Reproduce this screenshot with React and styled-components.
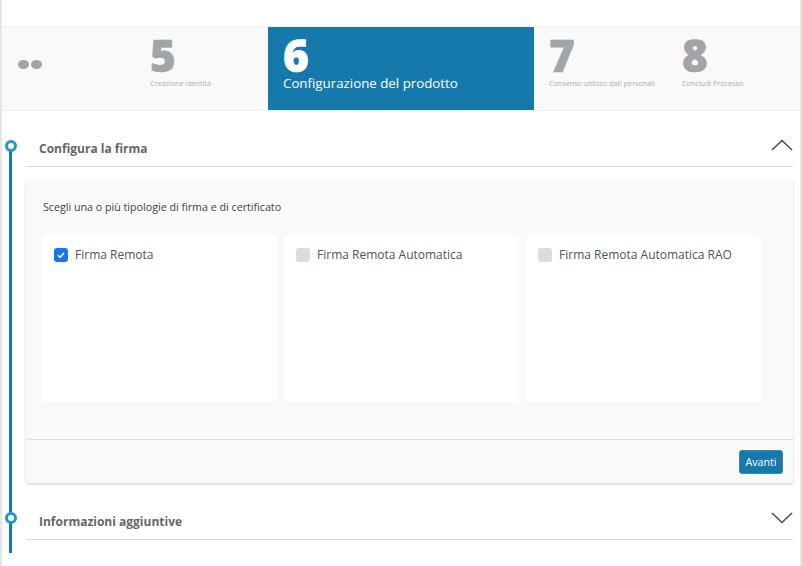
import React from "react";
import styled, { createGlobalStyle } from "styled-components";

const Global = createGlobalStyle`
  html, body { margin: 0; padding: 0; background: #fff; }
  body { font-family: "Open Sans", "Noto Sans", "Liberation Sans", sans-serif; }
`;

const Page = styled.div`
  width: 802px;
  height: 566px;
  box-sizing: border-box;
  border-left: 2px solid #e6e6e6;
  border-right: 2px solid #e6e6e6;
  padding-top: 26px;
  overflow: hidden;
`;

const Stepper = styled.div`
  display: flex;
  height: 85px;
  box-sizing: border-box;
  background: #f9f9f9;
  border-top: 1px solid #f2f2f2;
  border-bottom: 1px solid #efefef;
`;

const Dots = styled.div`
  width: 148px;
  box-sizing: border-box;
  padding: 33px 0 0 16px;
  display: flex;
  gap: 2px;
`;

const Dot = styled.span`
  width: 11px;
  height: 9px;
  border-radius: 50%;
  background: #a2a5a8;
`;

const Step = styled.div`
  width: ${(p) => p.$width}px;
  box-sizing: border-box;
  padding-left: ${(p) => p.$pad}px;
`;

const ActiveStep = styled.div`
  width: 266px;
  box-sizing: border-box;
  padding-left: 15px;
  background: #1579ab;
  color: #fff;
`;

const Number = styled.div`
  font: 800 44px/38px "Open Sans", sans-serif;
  color: ${(p) => (p.$active ? "#fff" : "#a2a5a8")};
  margin-top: 9px;
  height: 38px;
  -webkit-text-stroke: 0.6px currentColor;
`;

const StepLabel = styled.div`
  font-size: 7.2px;
  line-height: 10px;
  margin-top: 4px;
  color: #b0b0b0;
  white-space: nowrap;
`;

const ActiveLabel = styled.div`
  font-size: 13.3px;
  line-height: 18px;
  margin-top: 0;
  white-space: nowrap;
`;

const Timeline = styled.div`
  position: relative;
  padding: 20px 7px 0 24px;
  &::before {
    content: "";
    position: absolute;
    left: 7px;
    top: 34px;
    height: 408px;
    width: 3px;
    background: #1579ab;
  }
`;

const SectionHeader = styled.div`
  position: relative;
  height: 36px;
  box-sizing: border-box;
  display: flex;
  align-items: center;
  justify-content: space-between;
  border-bottom: 1px solid #dcdcdc;
  padding: 0 0 0 13px;
`;

const Node = styled.span`
  position: absolute;
  left: -21px;
  top: ${(p) => p.$top}px;
  width: 12px;
  height: 12px;
  box-sizing: border-box;
  border: 3px solid #1a9bd0;
  border-radius: 50%;
  background: #fff;
`;

const SectionTitle = styled.h2`
  margin: 0;
  font-size: 12px;
  font-weight: 700;
  color: #666;
`;

const Chevron = styled.svg`
  width: 22px;
  height: 12px;
  display: block;
  margin-top: ${(p) => p.$offset}px;
`;

const Card = styled.div`
  margin-top: 14px;
  height: 302px;
  background: #f9f9f9;
  border-radius: 2px;
  box-shadow: 0 1px 3px rgba(0, 0, 0, 0.2);
  display: flex;
  flex-direction: column;
`;

const CardBody = styled.div`
  flex: 1;
  padding: 19px 16px 0 17px;
`;

const Prompt = styled.p`
  margin: 0 0 21px;
  font-size: 10.7px;
  line-height: 14px;
  color: #444;
`;

const Options = styled.div`
  display: flex;
  gap: 7px;
  margin-left: -1px;
`;

const Option = styled.div`
  width: 235px;
  height: 167px;
  box-sizing: border-box;
  background: #fff;
  border-radius: 4px;
  padding: 13px 12px;
  display: flex;
  align-items: flex-start;
  gap: 7px;
`;

const Box = styled.span`
  width: 14px;
  height: 14px;
  border-radius: 3px;
  background: ${(p) => (p.$checked ? "#1c74e9" : "#d8dce3")};
  display: flex;
  align-items: center;
  justify-content: center;
`;

const OptionLabel = styled.span`
  font-size: 12px;
  line-height: 14px;
  color: #4b5563;
  white-space: nowrap;
`;

const CardFooter = styled.div`
  height: 44px;
  box-sizing: border-box;
  border-top: 1px solid #dfdfdf;
  padding: 10px 10px 0 0;
  display: flex;
  justify-content: flex-end;
`;

const Button = styled.button`
  width: 44px;
  height: 24px;
  padding: 0;
  border: 1px solid #2f8ab8;
  border-radius: 3px;
  background: #1579ab;
  color: #fff;
  font-family: inherit;
  font-size: 10.7px;
`;

const Second = styled(SectionHeader)`
  margin-top: 20px;
  height: 37px;
`;

export default function App() {
  return (
    <Page>
      <Global />
      <Stepper>
        <Dots><Dot /><Dot /></Dots>
        <Step $width={118} $pad={0}>
          <Number>5</Number>
          <StepLabel>Creazione identità</StepLabel>
        </Step>
        <ActiveStep>
          <Number $active>6</Number>
          <ActiveLabel>Configurazione del prodotto</ActiveLabel>
        </ActiveStep>
        <Step $width={133} $pad={15}>
          <Number>7</Number>
          <StepLabel>Consenso utilizzo dati personali</StepLabel>
        </Step>
        <Step $width={118} $pad={15}>
          <Number>8</Number>
          <StepLabel>Concludi Processo</StepLabel>
        </Step>
      </Stepper>
      <Timeline>
        <SectionHeader>
          <Node $top={9} />
          <SectionTitle>Configura la firma</SectionTitle>
          <Chevron $offset={-8} viewBox="0 0 22 12" fill="none" stroke="#4a4f57" strokeWidth="1.6">
            <path d="M1 11 L11 1.5 L21 11" />
          </Chevron>
        </SectionHeader>
        <Card>
          <CardBody>
            <Prompt>Scegli una o più tipologie di firma e di certificato</Prompt>
            <Options>
              <Option>
                <Box $checked>
                  <svg width="10" height="10" viewBox="0 0 10 10" fill="none" stroke="#fff" strokeWidth="1.5">
                    <path d="M2 5.2 L4.2 7.2 L8 3" />
                  </svg>
                </Box>
                <OptionLabel>Firma Remota</OptionLabel>
              </Option>
              <Option>
                <Box />
                <OptionLabel>Firma Remota Automatica</OptionLabel>
              </Option>
              <Option>
                <Box />
                <OptionLabel>Firma Remota Automatica RAO</OptionLabel>
              </Option>
            </Options>
          </CardBody>
          <CardFooter>
            <Button>Avanti</Button>
          </CardFooter>
        </Card>
        <Second>
          <Node $top={9} />
          <SectionTitle>Informazioni aggiuntive</SectionTitle>
          <Chevron $offset={-6} viewBox="0 0 22 12" fill="none" stroke="#4a4f57" strokeWidth="1.6">
            <path d="M1 1 L11 10.5 L21 1" />
          </Chevron>
        </Second>
      </Timeline>
    </Page>
  );
}
